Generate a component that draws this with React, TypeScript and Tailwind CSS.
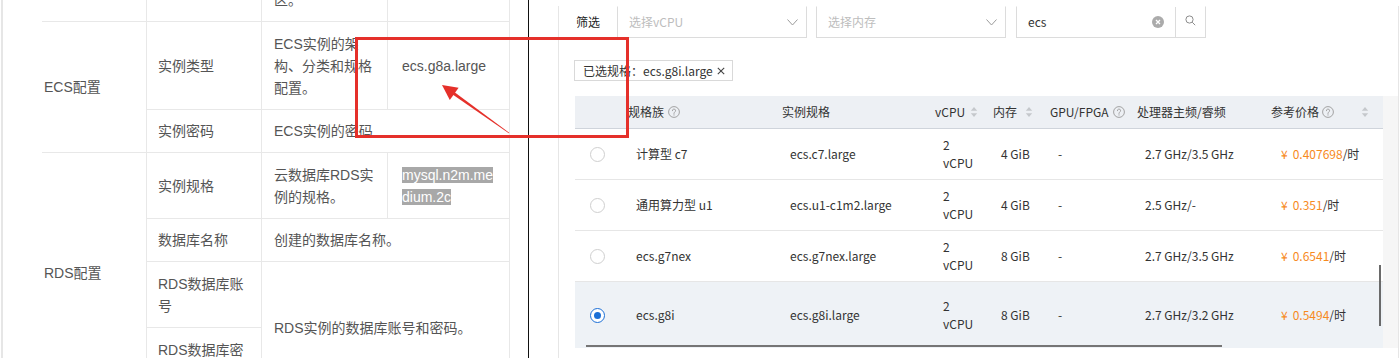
import React from "react";

const rows = [
  { fam: "计算型 c7", spec: "ecs.c7.large", mem: "4 GiB", freq: "2.7 GHz/3.5 GHz", price: "0.407698", selected: false },
  { fam: "通用算力型 u1", spec: "ecs.u1-c1m2.large", mem: "4 GiB", freq: "2.5 GHz/-", price: "0.351", selected: false },
  { fam: "ecs.g7nex", spec: "ecs.g7nex.large", mem: "8 GiB", freq: "2.7 GHz/3.5 GHz", price: "0.6541", selected: false },
  { fam: "ecs.g8i", spec: "ecs.g8i.large", mem: "8 GiB", freq: "2.7 GHz/3.2 GHz", price: "0.5494", selected: true },
];

const cols = "grid grid-cols-[53px_154px_153px_58px_57px_87px_134px_112px]";
const cell = "border-b border-r border-[#e8e8e8] flex items-center leading-[22px]";

function HelpIcon() {
  return (
    <svg width="12" height="12" viewBox="0 0 12 12" fill="none" className="shrink-0">
      <circle cx="6" cy="6" r="5.4" stroke="#9a9a9a" strokeWidth="0.9" />
      <path d="M4.4 4.7a1.6 1.6 0 1 1 2.3 1.4c-.5.3-.7.6-.7 1.1v.3" stroke="#9a9a9a" strokeWidth="0.9" strokeLinecap="round" />
      <circle cx="6" cy="8.9" r="0.55" fill="#9a9a9a" />
    </svg>
  );
}

function SortIcon() {
  return (
    <svg width="8" height="12" viewBox="0 0 8 12" className="shrink-0">
      <path d="M4 1 7.2 4.8H.8Z" fill="#c5c8cc" />
      <path d="M4 11 7.2 7.2H.8Z" fill="#c5c8cc" />
    </svg>
  );
}

function Chevron() {
  return (
    <svg width="11" height="7" viewBox="0 0 11 7" fill="none">
      <path d="M.5.5l5 5.5 5-5.5" stroke="#9b9b9b" />
    </svg>
  );
}

function Radio({ checked }: { checked: boolean }) {
  return checked ? (
    <span className="w-[15px] h-[15px] rounded-full border-[1.5px] border-[#1b6fd6] bg-white flex items-center justify-center">
      <span className="w-[7px] h-[7px] rounded-full bg-[#1b6fd6]" />
    </span>
  ) : (
    <span className="w-[15px] h-[15px] rounded-full border border-[#cfcfcf] bg-white" />
  );
}

function DocTable() {
  return (
    <div className="grid grid-cols-[105px_115px_126px_122px] grid-rows-[43px_88px_43px_66px_43px_66px_66px] -mt-[21px] ml-[39px] text-[14px] text-[#555] font-['Liberation_Sans','Noto_Sans_CJK_SC',sans-serif]">
      <div className={`${cell} col-start-1 row-start-1`} />
      <div className={`${cell} col-start-2 row-start-1`} />
      <div className={`${cell} col-start-3 row-start-1 pl-[12px]`}>区。</div>
      <div className={`${cell} col-start-4 row-start-1`} />

      <div className={`${cell} col-start-1 row-start-2 row-span-2 pl-[2px]`}>ECS配置</div>
      <div className={`${cell} col-start-2 row-start-2 pl-[11px]`}>实例类型</div>
      <div className={`${cell} col-start-3 row-start-2 pl-[12px]`}>
        <span>
          ECS实例的架
          <br />
          构、分类和规格
          <br />
          配置。
        </span>
      </div>
      <div className={`${cell} col-start-4 row-start-2 pl-[14px]`}>ecs.g8a.large</div>

      <div className={`${cell} col-start-2 row-start-3 pl-[11px]`}>实例密码</div>
      <div className={`${cell} col-start-3 col-span-2 row-start-3 pl-[12px]`}>ECS实例的密码</div>

      <div className={`${cell} col-start-1 row-start-4 row-span-4 pl-[2px]`}>RDS配置</div>
      <div className={`${cell} col-start-2 row-start-4 pl-[11px]`}>实例规格</div>
      <div className={`${cell} col-start-3 row-start-4 pl-[12px]`}>
        <span>
          云数据库RDS实
          <br />
          例的规格。
        </span>
      </div>
      <div className={`${cell} col-start-4 row-start-4 pl-[14px]`}>
        <span className="text-white">
          <span className="bg-[#a8a8a8]">mysql.n2m.me</span>
          <br />
          <span className="bg-[#a8a8a8]">dium.2c</span>
        </span>
      </div>

      <div className={`${cell} col-start-2 row-start-5 pl-[11px]`}>数据库名称</div>
      <div className={`${cell} col-start-3 col-span-2 row-start-5 pl-[12px]`}>创建的数据库名称。</div>

      <div className={`${cell} col-start-2 row-start-6 pl-[11px]`}>
        <span>
          RDS数据库账
          <br />号
        </span>
      </div>
      <div className={`${cell} col-start-3 col-span-2 row-start-6 row-span-2 pl-[12px]`}>RDS实例的数据库账号和密码。</div>
      <div className={`${cell} col-start-2 row-start-7 pl-[11px]`}>
        <span>
          RDS数据库密
          <br />码
        </span>
      </div>
    </div>
  );
}

function SpecPicker() {
  return (
    <div className="ml-[29px] mt-[18px] w-[841px] h-[400px] border-x border-[#e6e6e6] pl-[15px] text-[12px] text-[#333] font-['Noto_Sans_CJK_SC',sans-serif]">
      <div className="-mt-[12px] h-[32px] flex items-stretch">
        <div className="w-[43px] pl-[2px] flex items-center text-[#222]">筛选</div>
        <div className="w-[190px] border border-t-transparent border-[#dcdcdc] flex items-center justify-between pl-[11px] pr-[8px] text-[#bdbdbd]">
          选择vCPU
          <Chevron />
        </div>
        <div className="ml-[9px] w-[190px] border border-t-transparent border-[#dcdcdc] flex items-center justify-between pl-[11px] pr-[8px] text-[#bdbdbd]">
          选择内存
          <Chevron />
        </div>
        <div className="ml-[10px] w-[190px] border border-t-transparent border-[#dcdcdc] flex">
          <div className="flex-1 flex items-center justify-between pl-[11px] pr-[11px] border-r border-[#dcdcdc]">
            ecs
            <svg width="12" height="12" viewBox="0 0 12 12">
              <circle cx="6" cy="6" r="6" fill="#ababab" />
              <path d="M4 4l4 4M8 4l-4 4" stroke="#fff" strokeWidth="1.3" />
            </svg>
          </div>
          <div className="w-[29px] flex items-center justify-center pb-[3px]">
            <svg width="11" height="11" viewBox="0 0 11 11" fill="none">
              <circle cx="4.5" cy="4.5" r="3.6" stroke="#8c8c8c" />
              <path d="M7.2 7.2l3 3" stroke="#8c8c8c" />
            </svg>
          </div>
        </div>
      </div>

      <div className="mt-[22px] w-fit h-[21px] border border-[#d9d9d9] flex items-center pl-[8px] pr-[7px] whitespace-nowrap">
        已选规格：ecs.g8i.large
        <svg width="8" height="8" viewBox="0 0 8 8" fill="none" className="ml-[4px]">
          <path d="M.8.8l6.4 6.4M7.2.8L.8 7.2" stroke="#444" strokeWidth="1.1" />
        </svg>
      </div>

      <div className="relative mt-[15px] ml-[1px] flex">
        <div className="w-[808px]">
          <div className={`${cols} h-[33px] items-center bg-[#edf0f4] border-b border-[#cfd4db]`}>
            <div />
            <div className="flex items-center gap-[4px]">
              规格族 <HelpIcon />
            </div>
            <div>实例规格</div>
            <div className="flex items-center gap-[5px]">
              vCPU <SortIcon />
            </div>
            <div className="flex items-center gap-[8px]">
              内存 <SortIcon />
            </div>
            <div className="flex items-center gap-[4px]">
              GPU/FPGA <HelpIcon />
            </div>
            <div>处理器主频/睿频</div>
            <div className="flex items-center justify-between pr-[14px]">
              <span className="flex items-center gap-[3px]">
                参考价格 <HelpIcon />
              </span>
              <SortIcon />
            </div>
          </div>
          {rows.map((r) => (
            <div
              key={r.spec}
              className={`${cols} items-center ${r.selected ? "h-[66px] bg-[#eef2f6]" : "h-[51px] border-b border-[#e6e6e6]"}`}
            >
              <div className="pl-[15px] flex">
                <Radio checked={r.selected} />
              </div>
              <div className="pl-[8px]">{r.fam}</div>
              <div className="pl-[8px]">{r.spec}</div>
              <div className="pl-[8px] leading-[18px]">
                2
                <br />
                vCPU
              </div>
              <div className="pl-[8px]">{r.mem}</div>
              <div className="pl-[8px]">-</div>
              <div className="pl-[8px]">{r.freq}</div>
              <div className="pl-[10px]">
                <span className="text-[#f78a1d]">
                  <span className="mr-[5px]">¥</span>
                  {r.price}
                </span>
                /时
              </div>
            </div>
          ))}
        </div>
        <div className="w-[15px] h-[252px] bg-[#f6f6f6]" />
        <div className="absolute left-[11px] top-[249px] w-[636px] h-[2px] bg-[#757575]" />
        <div className="absolute left-[804px] top-[169px] w-[2px] h-[61px] bg-[#6a6a6a]" />
      </div>
    </div>
  );
}

export default function App() {
  return (
    <div className="relative w-[1400px] h-[358px] overflow-hidden bg-white flex">
      <div className="w-[528px] shrink-0 flex">
        <div className="w-[1px]" />
        <div className="w-[2px] bg-[#e6e6e6]" />
        <DocTable />
      </div>
      <div className="w-[1px] shrink-0 bg-[#111]" />
      <div className="flex-1">
        <SpecPicker />
      </div>

      <div className="absolute left-[355px] top-[37px] w-[274px] h-[101px] border-[3px] border-[#e5302a]" />
      <svg className="absolute inset-0 pointer-events-none" width="1400" height="358" viewBox="0 0 1400 358">
        <polygon points="442,85 449.8,99.9 458.6,87.7" fill="#e5302a" />
        <polygon points="452.6,90.8 509.2,132.7 508.8,133.3 450.8,93.2" fill="#e5302a" />
      </svg>
    </div>
  );
}
